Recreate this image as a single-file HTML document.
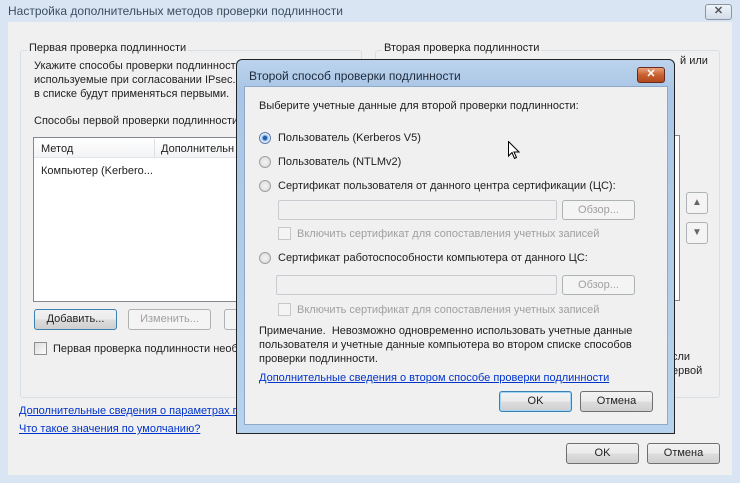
<html><head><style>
*{box-sizing:border-box}
body{margin:0;width:740px;height:483px;overflow:hidden;background:#d9e5f2;font-family:"Liberation Sans",sans-serif;font-size:11px;color:#1e1e1e;position:relative}
.a{position:absolute;white-space:nowrap}
.btn{position:absolute;border:1px solid #707070;border-radius:3px;background:linear-gradient(#f2f2f2 0%,#ebebeb 50%,#dddddd 51%,#cfcfcf 100%);text-align:center;line-height:18px}
.dis{border-color:#adb2b5;background:#f4f4f4;color:#a0a0a0}
.grp{position:absolute;border:1px solid #d5dfe5;border-radius:3px}
.lbl{position:absolute;background:#f0f0f0;padding:0 2px;top:-8px;left:6px}
.rad{position:absolute;width:12px;height:12px;border-radius:50%;border:1px solid #a0a0a0;background:radial-gradient(#f4f4f4,#d8d8d8)}
.chk{position:absolute;width:13px;height:13px;border:1px solid #8f8f8f;background:linear-gradient(135deg,#ddd,#fbfbfb)}
.chk.d{border-color:#c8c8c8;background:#f4f4f4}
.link{color:#0033cc;text-decoration:underline}
.tb{position:absolute;border:1px solid #c8ccd0;border-radius:2px;background:#f0f0f0}
.g{color:#a0a0a0}
</style></head><body>
<div class="a" style="left:8px;top:4px;font-size:12px;color:#3c4d62">Настройка дополнительных методов проверки подлинности</div>
<div class="btn" style="left:705px;top:4px;width:27px;height:16px;border-color:#8b96a4;background:linear-gradient(#eef3f9,#d3dde9);line-height:13px;font-weight:bold;color:#555">✕</div>
<div style="position:absolute;left:8px;top:22px;width:724px;height:453px;background:#f0f0f0"></div>

<div class="grp" style="left:20px;top:50px;width:342px;height:348px"><span class="lbl" style="top:-9px">Первая проверка подлинности</span></div>
<div class="grp" style="left:375px;top:50px;width:345px;height:348px"><span class="lbl" style="top:-9px">Вторая проверка подлинности</span></div>
<div class="a" style="left:34px;top:59px;line-height:14px">Укажите способы проверки подлинност<br>используемые при согласовании IPsec.<br>в списке будут применяться первыми.</div>
<div class="a" style="left:34px;top:115px">Способы первой проверки подлинности</div>
<div style="position:absolute;left:33px;top:137px;width:340px;height:165px;background:#fff;border:1px solid #828790"></div>
<div style="position:absolute;left:34px;top:138px;width:340px;height:20px;background:linear-gradient(#fff,#f3f4f6);border-bottom:1px solid #e5e5e5"></div>
<div style="position:absolute;left:154px;top:139px;width:1px;height:19px;background:#e0e0e0"></div>
<div class="a" style="left:41px;top:143px">Метод</div>
<div class="a" style="left:161px;top:143px">Дополнительн</div>
<div class="a" style="left:41px;top:165px">Компьютер (Kerbero...</div>
<div class="btn" style="left:34px;top:309px;width:83px;height:21px;border-color:#3c7fb1">Добавить...</div>
<div class="btn dis" style="left:128px;top:309px;width:83px;height:21px">Изменить...</div>
<div class="btn dis" style="left:224px;top:309px;width:30px;height:21px"></div>
<div class="chk" style="left:34px;top:342px"></div>
<div class="a" style="left:53px;top:343px">Первая проверка подлинности необ</div>
<div class="a link" style="left:19px;top:405px">Дополнительные сведения о параметрах п</div>
<div class="a link" style="left:19px;top:423px">Что такое значения по умолчанию?</div>
<div class="a" style="left:680px;top:55px">й или</div>
<div class="a" style="left:672px;top:351px">сли</div>
<div class="a" style="left:672px;top:365px">ервой</div>
<div style="position:absolute;left:600px;top:135px;width:80px;height:166px;background:#fff;border:1px solid #828790"></div>
<div class="btn dis" style="left:686px;top:192px;width:22px;height:22px;color:#666;font-size:10px;line-height:20px">▲</div>
<div class="btn dis" style="left:686px;top:222px;width:22px;height:22px;color:#666;font-size:10px;line-height:20px">▼</div>
<div class="btn" style="left:566px;top:443px;width:73px;height:21px">OK</div>
<div class="btn" style="left:647px;top:443px;width:73px;height:21px">Отмена</div>

<!-- inner dialog -->
<div style="position:absolute;left:236px;top:59px;width:439px;height:375px;border:1px solid #222;border-radius:6px 6px 0 0;background:linear-gradient(#bcd3ec,#a9c6e6 30px,#b7d2ee)"></div>
<div style="position:absolute;left:244px;top:86px;width:424px;height:339px;background:#f0f0f0;border:1px solid #8fa9c6"></div>
<div class="a" style="left:249px;top:69px;font-size:12px;color:#1e2a3a">Второй способ проверки подлинности</div>
<div class="btn" style="left:637px;top:67px;width:28px;height:16px;border-color:#6b2a20;background:linear-gradient(#e8a27c,#c8612f 50%,#b04a1e);color:#fff;font-weight:bold;line-height:13px">✕</div>
<div class="a" style="left:259px;top:100px">Выберите учетные данные для второй проверки подлинности:</div>
<div class="rad" style="left:259px;top:132px;background:radial-gradient(#1e5fb0 25%,#9ec3ea 40%,#eef 60%);border-color:#5a7fa8"></div>
<div class="a" style="left:278px;top:132px">Пользователь (Kerberos V5)</div>
<div class="rad" style="left:259px;top:156px"></div>
<div class="a" style="left:278px;top:156px">Пользователь (NTLMv2)</div>
<div class="rad" style="left:259px;top:180px"></div>
<div class="a" style="left:278px;top:180px">Сертификат пользователя от данного центра сертификации (ЦС):</div>
<div class="tb" style="left:278px;top:200px;width:279px;height:20px"></div>
<div class="btn dis" style="left:562px;top:200px;width:73px;height:20px">Обзор...</div>
<div class="chk d" style="left:278px;top:227px"></div>
<div class="a g" style="left:297px;top:228px">Включить сертификат для сопоставления учетных записей</div>
<div class="rad" style="left:259px;top:252px"></div>
<div class="a" style="left:278px;top:252px">Сертификат работоспособности компьютера от данного ЦС:</div>
<div class="tb" style="left:276px;top:275px;width:281px;height:20px"></div>
<div class="btn dis" style="left:562px;top:275px;width:73px;height:20px">Обзор...</div>
<div class="chk d" style="left:278px;top:303px"></div>
<div class="a g" style="left:297px;top:304px">Включить сертификат для сопоставления учетных записей</div>
<div class="a" style="left:259px;top:324px;line-height:14px">Примечание.&nbsp; Невозможно одновременно использовать учетные данные<br>пользователя и учетные данные компьютера во втором списке способов<br>проверки подлинности.</div>
<div class="a link" style="left:259px;top:372px">Дополнительные сведения о втором способе проверки подлинности</div>
<div class="btn" style="left:499px;top:391px;width:73px;height:21px;border-color:#3c7fb1;box-shadow:inset 0 0 0 1px #9fd6f5">OK</div>
<div class="btn" style="left:580px;top:391px;width:73px;height:21px">Отмена</div>
<svg style="position:absolute;left:508px;top:141px" width="12" height="19" viewBox="0 0 12 19"><path d="M0.5 0.5 L0.5 15 L4 11.5 L6.5 17.5 L8.5 16.5 L6 11 L11 11 Z" fill="#fff" stroke="#000"/></svg>
</body></html>
